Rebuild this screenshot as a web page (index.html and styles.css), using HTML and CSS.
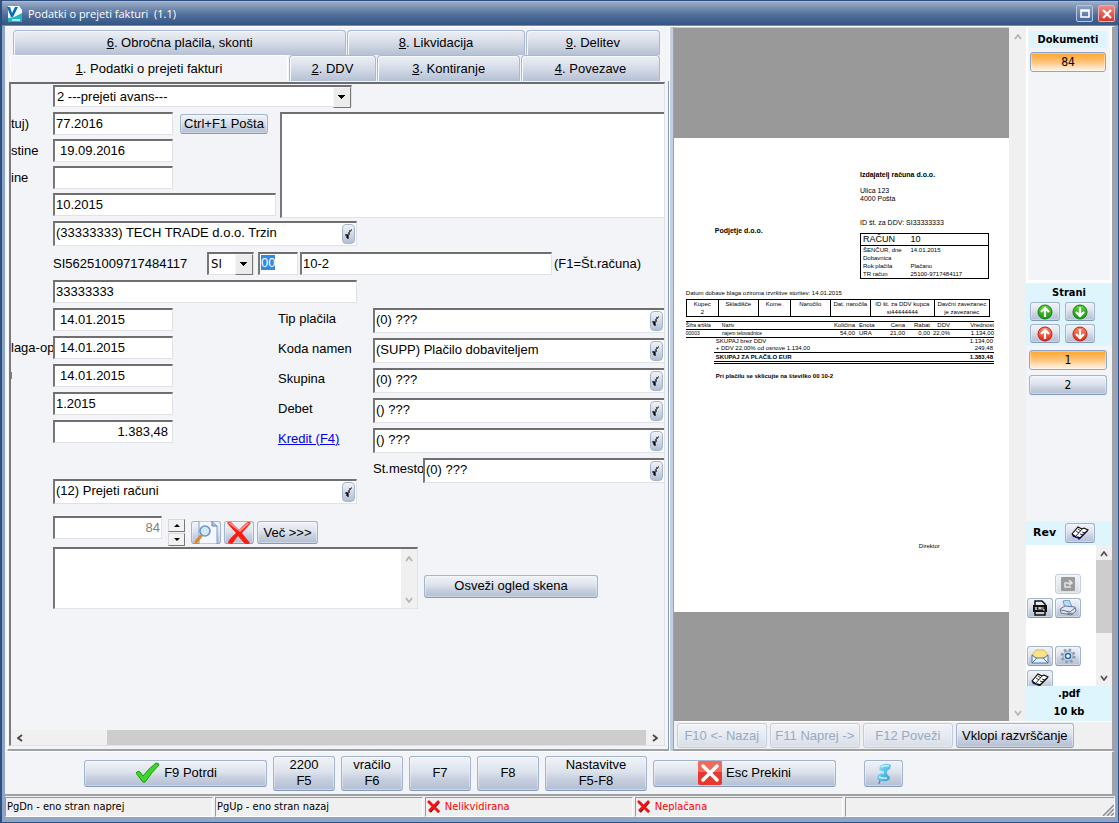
FILE: index.html
```html
<!DOCTYPE html>
<html lang="sl">
<head>
<meta charset="utf-8">
<title>Podatki o prejeti fakturi (1.1)</title>
<link rel="stylesheet" href="styles.css">
</head>
<body>
<svg class="defs" width="0" height="0" aria-hidden="true">
  <defs>
    <linearGradient id="gGreen" x1="0" y1="0" x2="0" y2="1"><stop offset="0" stop-color="#5fd13a"/><stop offset="1" stop-color="#109a0c"/></linearGradient>
    <linearGradient id="gRed" x1="0" y1="0" x2="0" y2="1"><stop offset="0" stop-color="#ff8a6a"/><stop offset="1" stop-color="#e8250f"/></linearGradient>
    <linearGradient id="gPin" x1="0" y1="0" x2="1" y2="1"><stop offset="0" stop-color="#9be4fb"/><stop offset="1" stop-color="#1e9fd8"/></linearGradient>
    <symbol id="pick" viewBox="0 0 8 14"><path d="M0 8h2M2 7v4M3 12V8M4 8V5M5 5V3M6 3h1" fill="none" stroke="#000" stroke-width="1.200"/></symbol>
    <symbol id="up" viewBox="0 0 8 6"><path d="M1 5l3-4 3 4" fill="none" stroke="currentColor" stroke-width="1.7"/></symbol>
    <symbol id="down" viewBox="0 0 8 6"><path d="M1 1l3 4 3-4" fill="none" stroke="currentColor" stroke-width="1.7"/></symbol>
    <symbol id="left" viewBox="0 0 6 8"><path d="M5 1L1 4l4 3" fill="none" stroke="currentColor" stroke-width="1.8"/></symbol>
    <symbol id="right" viewBox="0 0 6 8"><path d="M1 1l4 3-4 3" fill="none" stroke="currentColor" stroke-width="1.8"/></symbol>
    <symbol id="book" viewBox="0 0 18 16"><path d="M1 10l1 2 4 1 2 2 1-1 8-8-1-1z" fill="#1717b0"/><path d="M1 9l6-7 2 1 2 1 2-1 4 2-8 8-2-1H5z" fill="#fff" stroke="#000" stroke-width="1.100"/><path d="M11 4l-6 7M5 6l3 2M7 4l3 2M9 9l3 1M11 7l3 1" fill="none" stroke="#000" stroke-width=".8"/></symbol>
    <symbol id="arrowUp" viewBox="0 0 16 16"><path d="M8 13V4M4 8l4-4 4 4" fill="none" stroke="#fff" stroke-width="2.3"/></symbol>
    <symbol id="arrowDown" viewBox="0 0 16 16"><path d="M8 3v9M4 8l4 4 4-4" fill="none" stroke="#fff" stroke-width="2.3"/></symbol>
    <symbol id="smallX" viewBox="0 0 14 14"><path d="M2 2l10 10M12 2L3 12" fill="none" stroke="#5c1010" stroke-width="2.4"/><path d="M1 1l5 5 6 6M12 1L7 6l-5 5" fill="none" stroke="#f01414" stroke-width="2.6"/></symbol>
  </defs>
</svg>
<div class="window">
  <header class="titlebar">
    <svg class="app-icon" width="16" height="16" viewBox="0 0 16 16"><path d="M1 0h11l3 4v12H1z" fill="#f3fbfb"/><path d="M0 1h3l2 6 3-6h3L6 11H4z" fill="#0b6bb5"/><path d="M1 16v-4l6-1 8-4v9z" fill="#1fb9bd"/><path d="M5 14h8" stroke="#d9f7f7" stroke-width="1.5"/></svg>
    <h1 class="title">Podatki o prejeti fakturi&nbsp; (1.1)</h1>
    <button class="win-btn" aria-label="Povečaj"><svg width="10" height="9" viewBox="0 0 10 9"><path d="M1 1h8v7H1zM1 2h8" fill="none" stroke="#fff" stroke-width="1.6"/></svg></button>
    <button class="win-btn win-close" aria-label="Zapri"><svg width="10" height="10" viewBox="0 0 10 10"><path d="M1 1l8 8M9 1L1 9" stroke="#fff" stroke-width="2.4"/></svg></button>
  </header>

  <main class="content">
    <section class="editor">
      <nav class="tabs">
        <div class="tab-row">
          <button class="tab t6"><u>6</u>. Obročna plačila, skonti</button>
          <button class="tab t8"><u>8</u>. Likvidacija</button>
          <button class="tab t9"><u>9</u>. Delitev</button>
        </div>
        <div class="tab-row front">
          <button class="tab active t1"><u>1</u>. Podatki o prejeti fakturi</button>
          <button class="tab t2"><u>2</u>. DDV</button>
          <button class="tab t3"><u>3</u>. Kontiranje</button>
          <button class="tab t4"><u>4</u>. Povezave</button>
        </div>
      </nav>
      <div class="sheet">
        <div class="pane">
          <form class="form">
            <div class="row first">
              <span class="cut"></span>
              <span class="combo wide"><select aria-label="Vrsta"><option>2 ---prejeti avans---</option></select></span>
            </div>
            <div class="split">
              <div class="stack top-stack">
                <div class="row">
                  <label class="cut" for="f1">tuj)</label>
                  <input id="f1" class="field short" value="77.2016">
                  <button type="button" class="btn post">Ctrl+F1 Pošta</button>
                </div>
                <div class="row"><label class="cut" for="f2">stine</label><input id="f2" class="field short date" value="19.09.2016"></div>
                <div class="row"><label class="cut" for="f3">ine</label><input id="f3" class="field short"></div>
                <div class="row"><span class="cut"></span><input class="field medium" value="10.2015" aria-label="Obdobje"></div>
              </div>
              <textarea class="field notes" aria-label="Opomba"></textarea>
            </div>
            <div class="row partner">
              <span class="cut"></span>
              <span class="lookup long"><input value="(33333333) TECH TRADE d.o.o. Trzin" aria-label="Partner"><button type="button" class="pick" aria-label="Izberi"><svg width="8" height="14"><use href="#pick"/></svg></button></span>
            </div>
            <div class="row ref">
              <span class="cut"></span>
              <span class="iban">SI56251009717484117</span>
              <span class="combo tiny"><select aria-label="Model"><option>SI</option></select></span>
              <span class="field code" tabindex="0"><mark>00</mark></span>
              <input id="refno" class="field refno" value="10-2">
              <label for="refno">(F1=Št.računa)</label>
            </div>
            <div class="row"><span class="cut"></span><input class="field long" value="33333333" aria-label="Davčna številka"></div>
            <div class="split dates">
              <div class="stack">
                <div class="row"><span class="cut"></span><input class="field short date" value="14.01.2015" aria-label="Datum 1"></div>
                <div class="row"><label class="cut" for="d2">laga-op</label><input id="d2" class="field short date" value="14.01.2015"></div>
                <div class="row"><span class="cut link-end"></span><input class="field short date" value="14.01.2015" aria-label="Datum 3"></div>
                <div class="row"><span class="cut"></span><input class="field short" value="1.2015" aria-label="Mesec"></div>
                <div class="row"><span class="cut"></span><input class="field short num" value="1.383,48" aria-label="Znesek"></div>
              </div>
              <div class="stack lookups">
                <div class="row"><label class="name" for="l1">Tip plačila</label><span class="lookup"><input id="l1" value="(0) ???"><button type="button" class="pick" aria-label="Izberi"><svg width="8" height="14"><use href="#pick"/></svg></button></span></div>
                <div class="row"><label class="name" for="l2">Koda namen</label><span class="lookup"><input id="l2" value="(SUPP) Plačilo dobaviteljem"><button type="button" class="pick" aria-label="Izberi"><svg width="8" height="14"><use href="#pick"/></svg></button></span></div>
                <div class="row"><label class="name" for="l3">Skupina</label><span class="lookup"><input id="l3" value="(0) ???"><button type="button" class="pick" aria-label="Izberi"><svg width="8" height="14"><use href="#pick"/></svg></button></span></div>
                <div class="row"><label class="name" for="l4">Debet</label><span class="lookup"><input id="l4" value="() ???"><button type="button" class="pick" aria-label="Izberi"><svg width="8" height="14"><use href="#pick"/></svg></button></span></div>
                <div class="row"><a class="name" href="#l5">Kredit (F4)</a><span class="lookup"><input id="l5" value="() ???" aria-label="Kredit"><button type="button" class="pick" aria-label="Izberi"><svg width="8" height="14"><use href="#pick"/></svg></button></span></div>
                <div class="row"><span class="name"></span><label class="place" for="l6">St.mesto</label><span class="lookup"><input id="l6" value="(0) ???"><button type="button" class="pick" aria-label="Izberi"><svg width="8" height="14"><use href="#pick"/></svg></button></span></div>
              </div>
            </div>
            <div class="row book-row">
              <span class="cut"></span>
              <span class="lookup long"><input value="(12) Prejeti računi" aria-label="Knjiga"><button type="button" class="pick" aria-label="Izberi"><svg width="8" height="14"><use href="#pick"/></svg></button></span>
            </div>
            <div class="row scan-row">
              <span class="cut"></span>
              <input class="field scan num" value="84" disabled aria-label="Sken">
              <span class="spin">
                <button type="button" aria-label="Več"><svg width="6" height="3"><path d="M0 3l3-3 3 3z"/></svg></button>
                <button type="button" aria-label="Manj"><svg width="6" height="3"><path d="M0 0l3 3 3-3z"/></svg></button>
              </span>
              <button type="button" class="btn icon30" aria-label="Poglej"><svg width="26" height="23" viewBox="0 0 26 23"><path d="M6 0h13l5 5v18H6z" fill="#f4f8fe" stroke="#7f9fd0"/><path d="M19 0v5h5" fill="#a9c4ea" stroke="#5f86c2"/><circle cx="12" cy="10" r="5" fill="#cdeafc" stroke="#6c93c9" stroke-width="1.6"/><path d="M8 15l-5 6" stroke="#e08a1e" stroke-width="3" stroke-linecap="round"/></svg></button>
              <button type="button" class="btn icon30" aria-label="Briši"><svg width="26" height="23" viewBox="0 0 26 23"><path d="M1 2Q4-1 7 3l6 6 7-7q3-2 5 0l-9 10 8 10q-3 2-6 0l-6-7-6 8-4-1q0-3 8-10z" fill="#fa1d12"/><path d="M2 2Q5 0 8 4l5 5 8-7h3l-10 9z" fill="#ff8a7c"/></svg></button>
              <button type="button" class="btn more">Več &gt;&gt;&gt;</button>
            </div>
            <div class="row memo-row">
              <span class="cut"></span>
              <span class="memo"><textarea aria-label="Komentar"></textarea><span class="vbar"><svg width="8" height="6"><use href="#up"/></svg><svg width="8" height="6"><use href="#down"/></svg></span></span>
              <button type="button" class="btn refresh">Osveži ogled skena</button>
            </div>
          </form>
          <div class="hbar"><span class="arr"><svg width="6" height="8"><use href="#left"/></svg></span><span class="track"><span class="thumb"></span></span><span class="arr"><svg width="6" height="8"><use href="#right"/></svg></span></div>
        </div>
      </div>
    </section>
    <div class="splitter"></div>

    <section class="viewer">
      <div class="view-row">
        <div class="preview">
          <article class="doc">
            <div class="doc-head">
              <b class="buyer">Podjetje d.o.o.</b>
              <div class="issuer">
                <b>Izdajatelj računa d.o.o.</b>
                <p class="addr">Ulica 123<br>4000 Pošta</p>
                <p class="vat">ID št. za DDV: SI33333333</p>
                <table class="bill">
                  <tr class="big"><th>RAČUN</th><td>10</td></tr>
                  <tr><th>ŠENČUR, dne</th><td>14.01.2015</td></tr>
                  <tr><th>Dobavnica</th><td></td></tr>
                  <tr><th>Rok plačila</th><td>Plačano</td></tr>
                  <tr><th>TR račun</th><td>25100-9717484117</td></tr>
                </table>
              </div>
            </div>
            <p class="supply">Datum dobave blaga oziroma izvršitve storitev: 14.01.2015</p>
            <table class="refs">
              <colgroup><col class="w32"><col class="w40"><col class="w32"><col class="w40"><col class="w40"><col class="w64"><col></colgroup>
              <tr><th>Kupec</th><th>Skladišče</th><th>Kome.</th><th>Naročilo</th><th>Dat. naročila</th><th>ID št. za DDV kupca</th><th>Davčni zavezanec</th></tr>
              <tr><td>2</td><td></td><td></td><td></td><td></td><td>si44444444</td><td>je zavezanec</td></tr>
            </table>
            <table class="items">
              <colgroup><col class="w36"><col><col class="w30"><col class="w20"><col class="w30"><col class="w25"><col class="w20"><col class="w44"></colgroup>
              <tr><th class="mini">Šifra artikla</th><th class="mini">Naziv</th><th class="r">Količina</th><th>Enota</th><th class="r">Cena</th><th class="r">Rabat</th><th class="r">DDV</th><th class="r">Vrednost</th></tr>
              <tr><td class="mini">00003</td><td class="mini">najem telovadnice</td><td class="r">54,00</td><td>URA</td><td class="r">21,00</td><td class="r">0,00</td><td class="r">22,0%</td><td class="r">1.134,00</td></tr>
            </table>
            <div class="sums">
              <p><span>SKUPAJ brez DDV</span><span>1.134,00</span></p>
              <p><span>+ DDV 22,00% od osnove 1.134,00</span><span>249,48</span></p>
              <p class="total"><span>SKUPAJ ZA PLAČILO EUR</span><span>1.383,48</span></p>
            </div>
            <b class="pay">Pri plačilu se sklicujte na številko 00 10-2</b>
            <p class="sign">Direktor</p>
          </article>
        </div>
        <div class="vbar view-bar"><svg width="8" height="6"><use href="#up"/></svg><svg width="8" height="6"><use href="#down"/></svg></div>

        <aside class="side">
          <div class="docs">
            <h2>Dokumenti</h2>
            <button class="btn chip on">84</button>
          </div>
          <div class="pages-head">
            <h2>Strani</h2>
            <div class="moves">
              <button class="btn" aria-label="Gor"><svg width="16" height="16"><circle cx="8" cy="8" r="7" fill="url(#gGreen)" stroke="#137a10"/><use href="#arrowUp"/></svg></button>
              <button class="btn" aria-label="Dol"><svg width="16" height="16"><circle cx="8" cy="8" r="7" fill="url(#gGreen)" stroke="#137a10"/><use href="#arrowDown"/></svg></button>
              <button class="btn" aria-label="Na začetek"><svg width="16" height="16"><circle cx="8" cy="8" r="7" fill="url(#gRed)" stroke="#b3200f"/><use href="#arrowUp"/></svg></button>
              <button class="btn" aria-label="Na konec"><svg width="16" height="16"><circle cx="8" cy="8" r="7" fill="url(#gRed)" stroke="#b3200f"/><use href="#arrowDown"/></svg></button>
            </div>
          </div>
          <div class="pages">
            <button class="btn chip on">1</button>
            <button class="btn chip">2</button>
          </div>
          <div class="rev"><h2>Rev</h2><button class="btn" aria-label="Revizije"><svg width="18" height="16"><use href="#book"/></svg></button></div>
          <div class="tools">
            <div class="tool-grid">
              <span></span>
              <button class="btn faded" disabled aria-label="Obrni"><svg width="14" height="14" viewBox="0 0 14 14"><rect width="14" height="14" rx="1" fill="#9b9b9b"/><path d="M10 10H4V6h6M8 3l3 3-3 2" fill="none" stroke="#e2e2e2" stroke-width="1.6"/></svg></button>
              <button class="btn" aria-label="XML"><svg width="16" height="16" viewBox="0 0 16 16"><path d="M3 5V1h7l3 3v1M3 11v4h10v-4" fill="none" stroke="#111" stroke-width="1.500"/><path d="M1 5h14v7H1z" fill="#111"/><path d="M3 7l2 3M5 7l-2 3M7 10V7l1 2 1-2v3M11 7v3h2" fill="none" stroke="#fff" stroke-width=".8"/></svg></button>
              <button class="btn" aria-label="Natisni"><svg width="18" height="16" viewBox="0 0 18 16"><path d="M4 1l6-1 3 7-7 1z" fill="#b7dcf7" stroke="#5a87bd" stroke-width=".8"/><path d="M1 9l5-3 10 1 1 4-5 4-10-2z" fill="#e3e6ee" stroke="#5c6b8c" stroke-width=".9"/><path d="M2 10l9 2 5-4M8 13l6 1" fill="none" stroke="#5c6b8c"/></svg></button>
              <span></span><span></span>
              <button class="btn" aria-label="Pošlji"><svg width="18" height="15" viewBox="0 0 18 15"><path d="M1 6l4-5h8l4 5-8 5z" fill="#fbe38a" stroke="#d6ae3c" stroke-width=".8"/><path d="M1 6l4 3h8l4-3v8H1z" fill="#e6f0fb" stroke="#55779f"/><path d="M1 14l5-5M17 14l-5-5" stroke="#55779f"/></svg></button>
              <button class="btn" aria-label="Nastavitve"><svg width="16" height="16" viewBox="0 0 16 16"><circle cx="8" cy="8" r="6" fill="none" stroke="#8f9bab" stroke-width="3" stroke-dasharray="2.400 2.300"/><circle cx="8" cy="8" r="5" fill="#d3dae3" stroke="#98a4b3"/><circle cx="8" cy="8" r="2.500" fill="#fff" stroke="#2c66ab" stroke-width="1.500"/></svg></button>
              <button class="btn" aria-label="Knjiga"><svg width="18" height="16"><use href="#book"/></svg></button>
            </div>
            <div class="tool-bar"><svg width="8" height="6"><use href="#up"/></svg><span class="tool-thumb"></span><svg width="8" height="6"><use href="#down"/></svg></div>
          </div>
          <div class="info"><b>.pdf</b><b>10 kb</b></div>
        </aside>
      </div>
      <div class="view-actions">
        <button class="btn w91" disabled>F10 &lt;- Nazaj</button>
        <button class="btn w91" disabled>F11 Naprej -&gt;</button>
        <button class="btn w91" disabled>F12 Poveži</button>
        <button class="btn w119">Vklopi razvrščanje</button>
      </div>
    </section>
  </main>

  <div class="actions">
    <button class="btn act-wide"><svg width="26" height="22" viewBox="0 0 26 22"><path d="M2 11q2-3 4-1l3 4Q15 6 22 1q3 0 3 2-8 8-13 16-2 3-4 0z" fill="#3fd52a" stroke="#1f9a15"/></svg>F9 Potrdi</button>
    <button class="btn act-tall">2200<br>F5</button>
    <button class="btn act-tall">vračilo<br>F6</button>
    <button class="btn act-tall">F7</button>
    <button class="btn act-tall">F8</button>
    <button class="btn act-tall set">Nastavitve<br>F5-F8</button>
    <button class="btn act-wide"><svg width="24" height="24" viewBox="0 0 24 24"><rect width="24" height="24" rx="2" fill="#e8382c"/><path d="M0 2q0-2 2-2h20q2 0 2 2v9H0z" fill="#f26a5c"/><path d="M5 5l14 14M19 5L5 19" stroke="#fff" stroke-width="3.500" stroke-linecap="round"/></svg>Esc Prekini</button>
    <button class="btn act-pin" aria-label="Pripni"><svg width="18" height="21" viewBox="0 0 18 21"><path d="M5 17l-1 4" stroke="#7d8894" stroke-width="1.500"/><path d="M5 3q5-4 11-1l-1 4-3 2v3l3 3-1 3q-6 3-12-1l1-4 4-2V8L4 7z" fill="url(#gPin)"/><path d="M6 4q4-2 8-1M4 14q4 2 8 1M8 8v3" fill="none" stroke="#c6f0ff" stroke-width="1.500"/></svg></button>
  </div>
  <footer class="status">
    <span>PgDn - eno stran naprej</span>
    <span>PgUp - eno stran nazaj</span>
    <span class="bad"><svg width="14" height="14"><use href="#smallX"/></svg>Nelikvidirana</span>
    <span class="bad"><svg width="14" height="14"><use href="#smallX"/></svg>Neplačana</span>
    <span class="last"><svg width="12" height="12" viewBox="0 0 12 12"><path d="M1 12L12 1M5 12l7-7M9 12l3-3" stroke="#8c8c8c" stroke-width="1.500"/></svg></span>
  </footer>
</div>
</body>
</html>
```
FILE: styles.css
```css
* { box-sizing: border-box; }
body {
  margin: 0;
  font: 13px/16px "Liberation Sans", Arial, sans-serif;
  color: #000;
}
h1, h2, p { margin: 0; font-weight: normal; }
button, input, select, textarea { font: inherit; color: inherit; margin: 0; }
input, textarea, select { outline: 0; border-radius: 0; }
textarea { resize: none; }
svg { display: block; flex: none; }
.defs { position: absolute; }

.window {
  display: flex;
  flex-direction: column;
  min-height: 100vh;
  padding: 0 3px 5px;
  background: #8fa5c6;
  border: solid #2d4f82;
  border-width: 1px 1px 1px 2px;
}

/* Title bar */
.titlebar {
  display: flex;
  align-items: center;
  gap: 5px;
  height: 25px;
  margin: 0 -3px;
  padding: 0 3px 0 5px;
  border-top: 1px solid #a9b9d2;
  border-bottom: 1px solid #6f89b0;
  background: linear-gradient(#9aacc6, #6a84aa 35%, #4d6b98 60%, #335684);
}
.title { flex: 1; font: 11px/16px "Open Sans", sans-serif; color: #fff; }
.win-btn {
  display: flex;
  align-items: center;
  justify-content: center;
  width: 17px;
  height: 17px;
  padding: 0;
  border: 1px solid #b8c7dd;
  border-radius: 2px;
  background: linear-gradient(#8ca2c2, #45679a);
}
.win-close { background: linear-gradient(#f08c84, #d8322c); border-color: #f0b0ab; }

.content { display: flex; flex: 1; background: #f3f4f7; border-top: 1px solid #fff; border-right: 3px solid #9ea1a6; }

/* Buttons */
.btn {
  display: flex;
  align-items: center;
  justify-content: center;
  padding: 0;
  border: 1px solid #a3b4cf;
  border-bottom-color: #8499bb;
  border-radius: 3px;
  background: linear-gradient(#f1f3f8, #dce2ec 45%, #c9d1e0 65%, #b3bfd3);
  box-shadow: inset 0 0 0 1px rgba(255, 255, 255, .35);
}
.btn:disabled { color: #9aa9c2; border-color: #c3cddd; background: linear-gradient(#f1f3f7, #e6eaf1 50%, #d7dde8); }

/* Editor and tabs */
.editor { display: flex; flex-direction: column; flex: 663 1 0; min-width: 0; padding: 3px 0 0 2px; }
.tab-row { display: flex; gap: 1px; padding: 0 9px 0 6px; }
.tab-row.front { padding-left: 3px; }
.tab {
  height: 25px;
  padding: 0;
  border: 1px solid #a9b9d3;
  border-bottom: 0;
  border-radius: 4px 4px 0 0;
  background: linear-gradient(#eceff4, #d5dbe7 50%, #b4c0d4);
  box-shadow: inset 1px 1px 0 #f6f8fb;
}
.front .tab { height: 26px; }
.tab.active { background: #f3f4f7; border-color: #fff; box-shadow: none; }
.t6 { flex: 334 1 0; } .t8 { flex: 177 1 0; } .t9 { flex: 133 1 0; }
.t1 { flex: 279 1 0; } .t2 { flex: 86 1 0; } .t3 { flex: 143 1 0; } .t4 { flex: 138 1 0; }
.sheet { display: flex; flex: 1; padding: 1px 3px 3px 1px; border-right: 1px solid #8299bd; border-left: 1px solid #fff; border-bottom: 2px solid #9ea1a6; }
.pane { display: flex; flex-direction: column; flex: 1; min-width: 0; border: 1px solid #dfe1e4; border-top: 2px solid #6c6c6c; border-left: 2px solid #7a7a7a; }
.form { display: flex; flex-direction: column; flex: 1; padding-top: 1px; overflow: hidden; }
.row { display: flex; align-items: center; }
.cut { flex: none; width: 42px; overflow: hidden; white-space: nowrap; }
.link-end { height: 7px; border-left: 1px solid #3f8be8; }
.split { display: flex; }
.stack { display: flex; flex-direction: column; gap: 5px; }

/* Fields */
.field, .lookup, .combo, .memo {
  border: 1px solid #e1e2e5;
  border-top: 2px solid #6f6f6f;
  border-left: 2px solid #777;
  background: #fff;
}
.field { height: 23px; padding: 0 4px 1px 1px; }
.short { width: 120px; }
.medium { width: 223px; }
.long { width: 304px; }
.date { padding-left: 5px; }
.num { text-align: right; }
.combo { position: relative; display: flex; height: 22px; }
.combo select { flex: 1; appearance: none; border: 0; background: transparent; padding: 0 20px 0 2px; }
.combo::after {
  content: "";
  position: absolute;
  top: 0;
  right: 0;
  width: 16px;
  height: 19px;
  border: 1px solid #f6f6f6;
  border-right-color: #777;
  border-bottom-color: #777;
  background:
    linear-gradient(#000, #000) 4px 7px/7px 1px no-repeat,
    linear-gradient(#000, #000) 5px 8px/5px 1px no-repeat,
    linear-gradient(#000, #000) 6px 9px/3px 1px no-repeat,
    linear-gradient(#000, #000) 7px 10px/1px 1px no-repeat,
    #ececec;
  pointer-events: none;
}
.wide { width: 299px; }
.tiny { width: 47px; height: 23px; margin-right: 4px; font-family: "DejaVu Sans Condensed", sans-serif; }
.lookup { display: flex; align-items: center; height: 25px; padding-right: 1px; }
.lookup input { flex: 1; min-width: 0; padding: 0 0 3px 1px; border: 0; background: transparent; }
.pick {
  display: flex;
  align-items: center;
  justify-content: center;
  width: 13px;
  height: 20px;
  padding: 0;
  border: 1px solid #a3b4cf;
  border-radius: 4px;
  background: linear-gradient(#f1f3f8, #b3bfd3);
}

.first { margin-bottom: 5px; }
.top-stack { gap: 4px; width: 269px; }
.post { width: 88px; height: 20px; margin-left: 7px; }
.notes { flex: 1; height: 106px; border-right: 0; }
.partner { margin: 3px 0 6px; }
.ref { margin-bottom: 5px; white-space: nowrap; }
.iban { width: 154px; }
.code { width: 40px; margin-right: 2px; padding-top: 1px; }
.code mark { background: #2f8ae8; color: #fff; }
.refno { flex: 0 1 252px; margin-right: 2px; }
.dates { margin-top: 5px; }
.lookups { flex: 1; min-width: 0; margin-left: 105px; }
.lookups .lookup { flex: 1; min-width: 0; border-right: 0; }
.name { flex: none; width: 95px; padding-bottom: 3px; }
a.name { color: #00e; }
.place { width: 50px; padding-bottom: 3px; overflow: hidden; }
.book-row { margin: -4px 0 12px; }
.scan-row { align-items: flex-start; }
.scan { width: 109px; margin-right: 6px; }
.scan:disabled { color: #808080; padding-right: 1px; }
.spin { display: grid; gap: 1px; margin: 3px 6px 0 0; }
.spin button {
  display: flex;
  align-items: center;
  justify-content: center;
  width: 17px;
  height: 13px;
  padding: 0;
  border: 1px solid #d9d9d9;
  border-right-color: #777;
  border-bottom-color: #777;
  background: #f2f2f2;
}
.icon30 { width: 30px; height: 23px; margin: 5px 3px 0 0; }
.more { width: 61px; height: 23px; margin-top: 5px; }
.memo-row { margin-top: 1px; }
.memo { display: flex; width: 365px; height: 62px; }
.memo textarea { flex: 1; border: 0; padding: 2px; }
.vbar { display: flex; flex-direction: column; align-items: center; justify-content: space-between; width: 16px; padding: 7px 0 5px; background: #f0f0f0; color: #b4b4b4; }
.refresh { width: 174px; height: 23px; margin: 16px 0 0 6px; }

.hbar { display: flex; height: 15px; background: #f0f0f0; color: #444; }
.arr { display: flex; align-items: center; justify-content: center; width: 18px; }
.track { flex: 1; padding-left: 78px; }
.thumb { display: block; height: 100%; background: #cdcdcd; }

.splitter { width: 5px; border-left: 1px solid #fff; border-right: 1px solid #8fa5c6; background: #c3cfe0; }

/* Viewer */
.viewer { display: flex; flex-direction: column; flex: 439 1 0; min-width: 0; }
.view-row { display: flex; flex: 1; }
.preview { display: flex; flex-direction: column; justify-content: center; flex: 1; min-width: 0; background: #999; border-top: 1px solid #ccc; }
.view-bar { width: 17px; }
.doc { padding: 33px 15px 62px 12px; background: #fff; font-size: 7px; line-height: 8px; overflow: hidden; white-space: nowrap; }
.doc table { border-collapse: collapse; width: 100%; }
.doc th { font-weight: normal; text-align: left; }
.doc th, .doc td { padding: 0; }
.doc-head { display: flex; justify-content: space-between; padding-right: 5px; }
.buyer { margin: 56px 0 0 29px; }
.issuer { width: 129px; }
.addr { margin-top: 8px; }
.vat { margin: 16px 0 6px; }
.bill { border: 1px solid #000; font-size: 6px; }
.bill th { width: 50px; padding-left: 2px; }
.bill .big { font-size: 9px; line-height: 11px; border-bottom: 1px solid #000; }
.supply { margin: 10px 0 2px; font-size: 6px; }
.refs { table-layout: fixed; font-size: 6px; border: 1px solid #000; }
.doc .refs { width: 304px; }
.doc .refs th, .refs td { text-align: center; border-left: 1px solid #000; }
.items { table-layout: fixed; margin-top: 4px; font-size: 6px; line-height: 7px; }
.items tr { border-top: 1px solid #000; border-bottom: 1px solid #000; }
.doc .items .r { text-align: right; }
.items td:nth-child(4), .items th:nth-child(4) { padding-left: 4px; }
.doc .mini { font-size: 5px; }
.w20 { width: 20px; } .w25 { width: 25px; } .w30 { width: 30px; } .w32 { width: 32px; }
.w36 { width: 36px; } .w40 { width: 40px; } .w44 { width: 44px; } .w64 { width: 64px; }
.sums { margin-left: 28px; font-size: 6px; line-height: 7px; }
.sums p { display: flex; justify-content: space-between; padding: 0 1px 0 2px; }
.sums .total { border-top: 1px solid #000; border-bottom: 3px double #000; line-height: 8px; font-weight: bold; }
.pay { display: block; margin: 8px 0 0 30px; font-size: 6px; }
.sign { margin: 162px 0 0 233px; font-size: 6px; }

/* Side column */
.side {
  display: flex;
  flex-direction: column;
  width: 86px;
  font-family: "DejaVu Sans Condensed", sans-serif;
  font-size: 12px;
}
.side h2, .info b { font-weight: bold; font-size: 11px; text-align: center; }
.docs { flex: 255 1 0; padding: 4px 4px 0 2px; border-bottom: 3px solid #fff; border-left: 2px solid #fff; border-right: 2px solid #fff; }
.docs h2 { margin: 0 -1px 4px; background: #dff5fe; line-height: 17px; }
.side .chip { width: 100%; height: 20px; }
.chip.on { border-color: #8ea5cc; background: linear-gradient(#ffa52c, #ffc070 45%, #ffe9cc 85%, #fff3e2); }
.pages-head { padding: 0 0 3px; background: #dff5fe; }
.pages-head h2 { line-height: 19px; }
.moves { display: grid; grid-template-columns: 30px 30px; gap: 3px 5px; padding-left: 4px; }
.moves .btn { height: 19px; }
.pages { display: flex; flex-direction: column; gap: 5px; flex: 175 1 0; padding: 4px 5px 0 3px; }
.rev { display: flex; align-items: center; gap: 9px; height: 24px; padding-left: 7px; background: #dff5fe; }
.rev h2 { font-family: "DejaVu Sans", sans-serif; }
.rev .btn { width: 30px; height: 20px; }
.tools { display: flex; justify-content: space-between; height: 141px; overflow: hidden; background: #fff; }
.tool-grid { display: grid; grid-template-columns: 26px 26px; grid-auto-rows: 20px; gap: 4px 2px; padding: 29px 0 0 1px; }
.tool-bar { display: flex; flex-direction: column; align-items: center; justify-content: space-between; width: 16px; padding: 6px 0 5px; background: #f0f0f0; color: #555; }
.tool-thumb { width: 100%; height: 73px; margin-bottom: 40px; background: #cdcdcd; }
.info { display: grid; height: 35px; background: #dff5fe; }

.view-actions { display: flex; align-items: center; gap: 3px; height: 30px; padding-left: 3px; background: #f0f0f0; border-top: 1px solid #fff; border-bottom: 2px solid #9ea1a6; white-space: nowrap; }
.view-actions .btn { height: 25px; }
.w91 { width: 90px; }
.w119 { width: 118px; }

/* Bottom bars */
.actions { display: flex; align-items: center; gap: 6px; height: 45px; padding-left: 79px; background: #f3f4f7; border-top: 1px solid #fff; border-right: 3px solid #9ea1a6; border-bottom: 2px solid #9ea1a6; }
.act-wide { width: 183px; height: 27px; gap: 4px; }
.act-tall { width: 62px; height: 35px; }
.act-tall.set { width: 102px; }
.act-pin { width: 39px; height: 27px; margin-left: 22px; }
.status { display: flex; gap: 2px; height: 21px; padding-top: 1px; background: #f0f0f0; font: 11px/16px "DejaVu Sans Condensed", sans-serif; }
.status span { display: flex; align-items: center; flex: 207 1 0; gap: 4px; padding-left: 1px; border: 1px solid #fff; border-top-color: #999; border-left: 1px solid #999; white-space: nowrap; }
.status .bad { color: #f00; }
.status .last { flex: 270 1 0; align-items: flex-end; justify-content: flex-end; }
```
